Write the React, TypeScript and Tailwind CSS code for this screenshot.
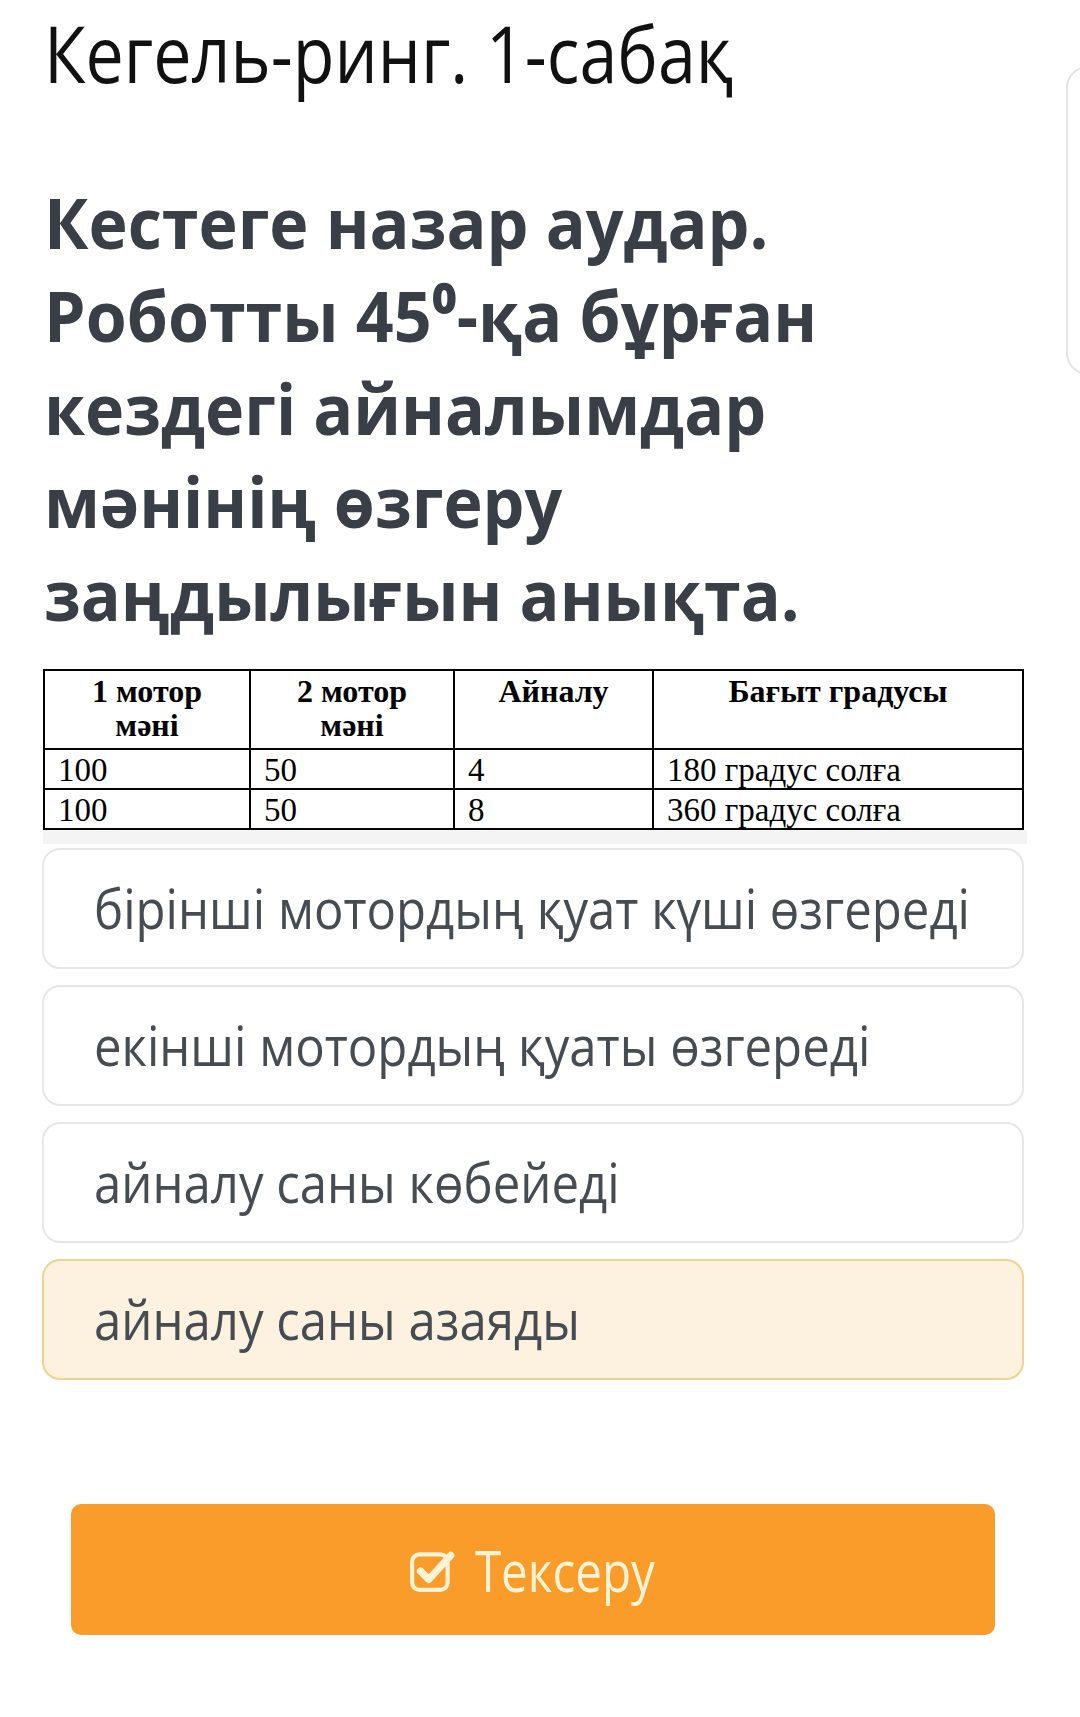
import { Fragment } from 'react'

const sans = "font-['Open_Sans','Noto_Sans',sans-serif]"
const serif = "font-['Liberation_Serif','Times_New_Roman',serif]"

const answers = [
  { text: 'бірінші мотордың қуат күші өзгереді', picked: false },
  { text: 'екінші мотордың қуаты өзгереді', picked: false },
  { text: 'айналу саны көбейеді', picked: false },
  { text: 'айналу саны азаяды', picked: true },
]

const questionLines = [
  'Кестеге назар аудар.',
  'Роботты 45⁰-қа бұрған',
  'кездегі айналымдар',
  'мәнінің өзгеру',
  'заңдылығын анықта.',
]

const rows = [
  ['100', '50', '4', '180 градус солға'],
  ['100', '50', '8', '360 градус солға'],
]

function CheckSquare() {
  return (
    <svg width="48" height="48" viewBox="0 0 46 46" fill="none">
      <rect x="3" y="8" width="34" height="34" rx="7" stroke="#fff3d6" strokeWidth="4" />
      <path d="M11 24 L19 32 L40 9" stroke="#fff3d6" strokeWidth="7" strokeLinecap="round" strokeLinejoin="round" />
    </svg>
  )
}

export default function App() {
  return (
    <div className={`relative w-[1080px] min-h-[1717px] bg-white overflow-hidden ${sans}`}>
      {/* next card peeking at the right */}
      <div className="absolute left-[1066px] top-[66px] w-[60px] h-[309px] rounded-[22px] border-2 border-[#e4e4e4]" />

      <div className="pl-[44px]">
        <h1 className="text-[78px] leading-[106px] text-[#111] whitespace-nowrap">
          <span className="inline-block origin-left scale-x-[0.874]">Кегель-ринг. 1-сабақ</span>
        </h1>

        <h2 className="mt-[70px] text-[70px] leading-[93px] font-bold text-[#3a3f47] whitespace-nowrap">
          {questionLines.map((l) => (
            <Fragment key={l}>
              <span className="inline-block origin-left scale-x-[0.947]">{l}</span>
              <br />
            </Fragment>
          ))}
        </h2>
      </div>

      {/* table */}
      <div className="ml-[43px] mt-[28px] w-[981px]">
        <table className={`w-full border-collapse border-2 border-black text-black ${serif}`}>
          <colgroup>
            <col className="w-[206px]" />
            <col className="w-[204px]" />
            <col className="w-[199px]" />
            <col />
          </colgroup>
          <thead>
            <tr className="h-[79px]">
              {['1 мотор мәні', '2 мотор мәні', 'Айналу', 'Бағыт градусы'].map((h) => (
                <th key={h} className="border-2 border-black align-top pt-[3px] px-[40px] text-[32px] font-bold leading-[34px] text-center">
                  {h}
                </th>
              ))}
            </tr>
          </thead>
          <tbody>
            {rows.map((r, i) => (
              <tr key={i} className="h-[40px]">
                {r.map((c, j) => (
                  <td key={j} className="border-2 border-black pl-[13px] text-[33px] leading-[36px] align-bottom whitespace-nowrap">
                    {c}
                  </td>
                ))}
              </tr>
            ))}
          </tbody>
        </table>
        <div className="h-[14px] w-[984px] bg-[#f4f4f4]" />
      </div>

      {/* answers */}
      <div className="ml-[42px] mt-[4px] w-[982px] flex flex-col gap-[16px]">
        {answers.map((a) => (
          <div
            key={a.text}
            className={`h-[121px] rounded-[18px] border-2 flex items-center pl-[50px] ${
              a.picked ? 'bg-[#fcf2df] border-[#efd38f]' : 'bg-white border-[#e5e7ea]'
            }`}
          >
            <span className="inline-block origin-left scale-x-[0.909] whitespace-nowrap text-[54px] text-[#474c53]">
              {a.text}
            </span>
          </div>
        ))}
      </div>

      {/* check button */}
      <div className="mt-[124px] ml-[71px] w-[924px] h-[131px] rounded-[10px] bg-[#f99c2a] flex items-center justify-center gap-[2px] pl-[14px]">
        <CheckSquare />
        <span className="inline-block scale-x-[0.85] text-[56px] text-[#fff3d6]">Тексеру</span>
      </div>
    </div>
  )
}
